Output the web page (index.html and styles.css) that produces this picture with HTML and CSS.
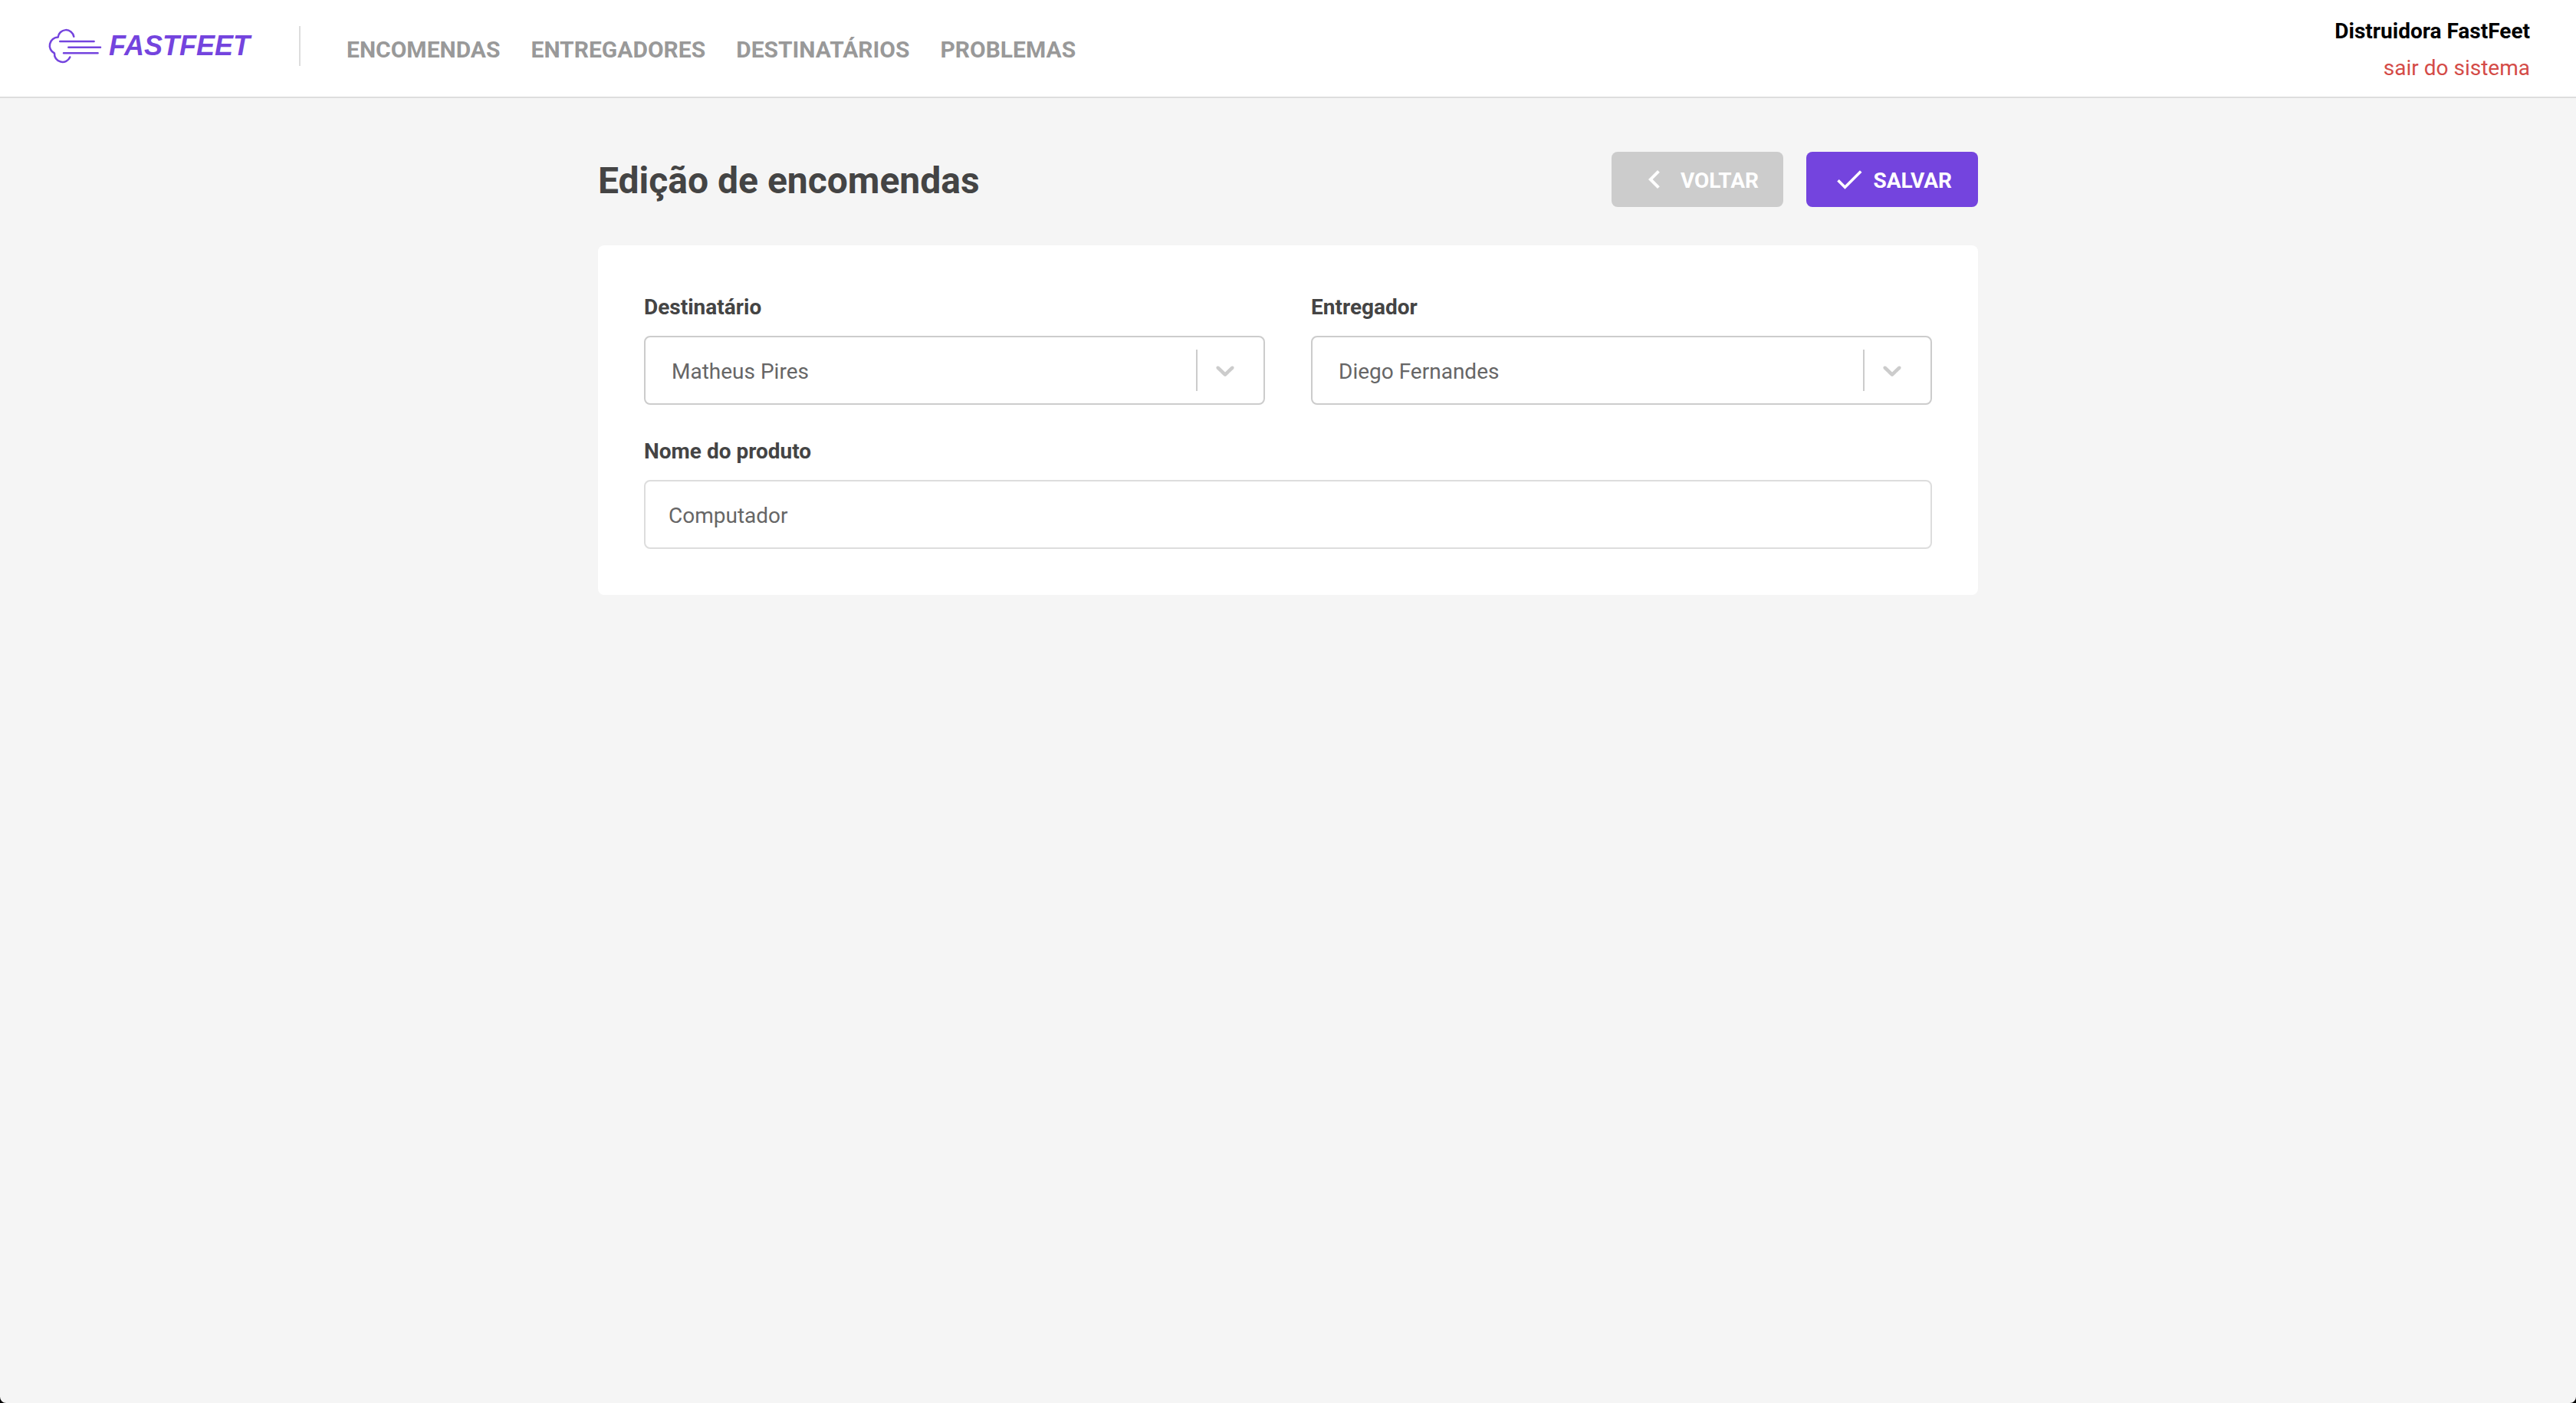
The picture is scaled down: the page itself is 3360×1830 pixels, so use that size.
FILE: index.html
```html
<!DOCTYPE html>
<html lang="pt-BR">
<head>
<meta charset="utf-8">
<meta name="viewport" content="width=device-width, initial-scale=1">
<title>FastFeet</title>
<link rel="stylesheet" href="styles.css">
</head>
<body>
<header class="header">
  <a class="logo" href="#">
    <svg viewBox="0 0 74 48" width="74" height="48" fill="none" stroke="currentColor" stroke-width="2.5" stroke-linecap="round" stroke-linejoin="round" aria-hidden="true">
      <path d="M36.300 11.700A10.400 10.400 0 0 0 15.700 12.600A11 11 0 0 0 11 33.500A10.600 10.600 0 0 0 31.300 38.500"/>
      <path d="M18.200 18H62.600M29.300 25.700H71M23 33.300H67.600"/>
    </svg>
    <span class="logo-text">FASTFEET</span>
  </a>
  <nav class="nav">
    <a href="#">ENCOMENDAS</a>
    <a href="#">ENTREGADORES</a>
    <a href="#">DESTINATÁRIOS</a>
    <a href="#">PROBLEMAS</a>
  </nav>
  <div class="profile">
    <strong>Distruidora FastFeet</strong>
    <a class="logout" href="#">sair do sistema</a>
  </div>
</header>

<main class="content">
  <form>
    <div class="toolbar">
      <h1>Edição de encomendas</h1>
      <div class="actions">
        <button class="button button-back" type="button">
          <svg viewBox="0 0 24 24" width="48" height="48" fill="currentColor" aria-hidden="true"><path d="M15.410 7.410L14 6l-6 6 6 6 1.410-1.410L10.830 12z"/></svg>
          <span>VOLTAR</span>
        </button>
        <button class="button button-save" type="submit">
          <svg viewBox="0 0 24 24" width="44" height="44" fill="currentColor" aria-hidden="true"><path d="M9 16.200L4.800 12l-1.400 1.400L9 19 21 7l-1.400-1.400L9 16.200z"/></svg>
          <span>SALVAR</span>
        </button>
      </div>
    </div>
    <div class="card">
      <div class="field">
        <label for="recipient">Destinatário</label>
        <div class="select">
          <select id="recipient"><option>Matheus Pires</option></select>
          <span class="indicator">
            <svg viewBox="0 0 20 20" width="40" height="40" fill="currentColor" aria-hidden="true"><path d="M4.516 7.548c0.436-0.446 1.043-0.481 1.576 0l3.908 3.747 3.908-3.747c0.533-0.481 1.141-0.446 1.574 0 0.436 0.445 0.408 1.197 0 1.615-0.406 0.418-4.695 4.502-4.695 4.502-0.217 0.223-0.502 0.335-0.787 0.335s-0.570-0.112-0.789-0.335c0 0-4.287-4.084-4.695-4.502s-0.436-1.170 0-1.615z"/></svg>
          </span>
        </div>
      </div>
      <div class="field">
        <label for="courier">Entregador</label>
        <div class="select">
          <select id="courier"><option>Diego Fernandes</option></select>
          <span class="indicator">
            <svg viewBox="0 0 20 20" width="40" height="40" fill="currentColor" aria-hidden="true"><path d="M4.516 7.548c0.436-0.446 1.043-0.481 1.576 0l3.908 3.747 3.908-3.747c0.533-0.481 1.141-0.446 1.574 0 0.436 0.445 0.408 1.197 0 1.615-0.406 0.418-4.695 4.502-4.695 4.502-0.217 0.223-0.502 0.335-0.787 0.335s-0.570-0.112-0.789-0.335c0 0-4.287-4.084-4.695-4.502s-0.436-1.170 0-1.615z"/></svg>
          </span>
        </div>
      </div>
      <div class="field field-wide">
        <label for="product">Nome do produto</label>
        <input id="product" type="text" value="Computador">
      </div>
    </div>
  </form>
</main>
</body>
</html>
```
FILE: styles.css
```css
* {
  box-sizing: border-box;
}

html {
  background: #000;
}

body {
  min-height: 100vh;
  margin: 0;
  border-radius: 0 0 8px 8px;
  background: #f5f5f5;
  color: #444;
  font: 28px/32px Roboto, sans-serif;
}

a {
  text-decoration: none;
}

.header {
  display: flex;
  align-items: center;
  height: 128px;
  padding: 4px 60px 0;
  border-bottom: 2px solid #ddd;
  background: #fff;
}

.logo {
  display: flex;
  align-items: center;
  gap: 8px;
  height: 52px;
  margin: 0 60px 10px 0;
  padding-right: 64px;
  border-right: 2px solid #ddd;
  color: #7444de;
}

.logo-text {
  font: italic bold 36px/40px "Liberation Sans", Arial, sans-serif;
}

.nav {
  display: flex;
  gap: 40px;
  font-size: 30px;
  font-weight: bold;
}

.nav a {
  color: #999;
}

.profile {
  display: flex;
  flex-direction: column;
  align-items: flex-end;
  gap: 16px;
  margin-left: auto;
  color: #000;
}

.logout {
  color: #d44b47;
}

.content {
  max-width: 1920px;
  margin: 0 auto;
  padding: 70px 60px;
}

.toolbar {
  display: flex;
  align-items: center;
  justify-content: space-between;
  margin-bottom: 50px;
}

h1 {
  margin: 0;
  padding-top: 4px;
  font-size: 48px;
  line-height: 56px;
}

.actions {
  display: flex;
  gap: 30px;
}

.button {
  display: flex;
  align-items: center;
  justify-content: space-between;
  width: 224px;
  height: 72px;
  padding: 0 32px;
  border: 0;
  border-radius: 8px;
  color: #fff;
  font: bold 28px/32px Roboto, sans-serif;
}

.button span {
  padding-top: 4px;
}

.button-back {
  background: #ccc;
}

.button-save {
  padding: 0 34px;
  background: #7444de;
}

.card {
  display: grid;
  grid-template-columns: 1fr 1fr;
  gap: 45px 60px;
  padding: 65px 60px 60px;
  border-radius: 8px;
  background: #fff;
}

.field {
  display: flex;
  flex-direction: column;
  gap: 21px;
}

.field-wide {
  grid-column: 1 / -1;
}

label {
  font-weight: bold;
}

.select {
  position: relative;
}

select,
input {
  display: block;
  width: 100%;
  height: 90px;
  padding: 2px 30px 0;
  border: 2px solid #ddd;
  border-radius: 8px;
  background: #fff;
  color: #666;
  font: 28px/32px Roboto, sans-serif;
}

select {
  appearance: none;
  padding: 4px 92px 0 34px;
  border-color: #ccc;
}

.indicator {
  position: absolute;
  top: 18px;
  right: 0;
  display: flex;
  align-items: center;
  width: 90px;
  height: 54px;
  padding-left: 16px;
  border-left: 2px solid #ccc;
  color: #ccc;
  pointer-events: none;
}
```
